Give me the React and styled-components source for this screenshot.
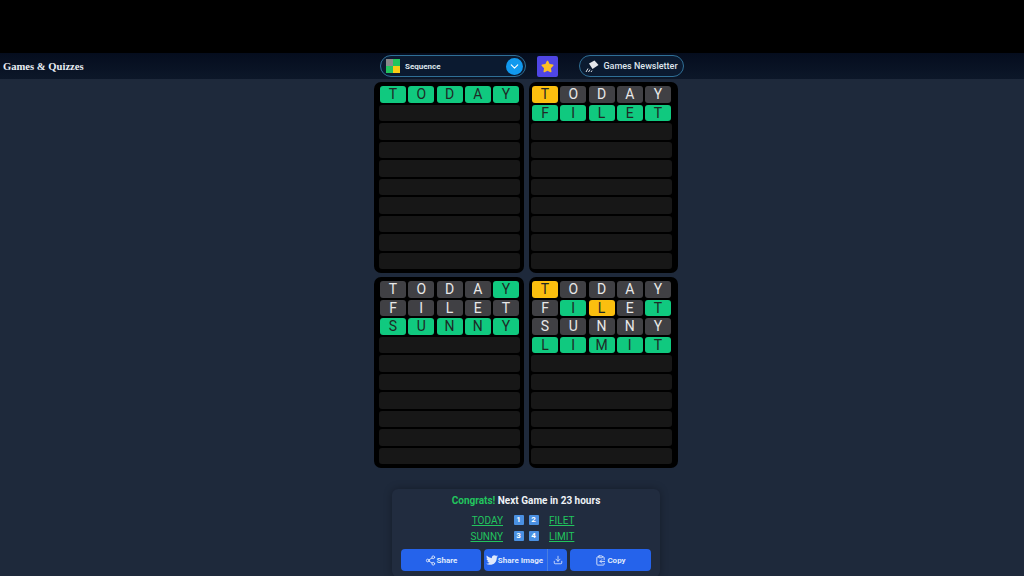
import React from 'react'
import styled, { createGlobalStyle } from 'styled-components'
import { Share2, Download, ClipboardCopy, ChevronDown } from 'lucide-react'
import { FaTwitter, FaStar } from 'react-icons/fa'

const GlobalStyle = createGlobalStyle`
  html, body { margin: 0; padding: 0; background: #1e293b; }
  body { font-family: Roboto, "Liberation Sans", sans-serif; overflow: hidden; }
`

const Page = styled.div`
  width: 1024px;
  height: 576px;
  overflow: hidden;
  background: #1e293b;
`
const AdBand = styled.div`
  height: 53px;
  background: #000;
`
const Header = styled.header`
  height: 26px;
  display: flex;
  align-items: center;
  background: linear-gradient(#050d1e, #0c1729);
`
const Brand = styled.div`
  font-family: "Liberation Serif", serif;
  font-weight: 700;
  font-size: 10.6px;
  color: #e8edf3;
  padding-left: 3px;
  box-sizing: border-box;
  width: 380px;
  flex: none;
`
const Select = styled.div`
  width: 146px;
  height: 22px;
  box-sizing: border-box;
  border: 1px solid #2f6f96;
  border-radius: 11px;
  background: #0b1a30;
  display: flex;
  align-items: center;
  padding: 0 2px 0 5px;
  flex: none;
`
const SelectLabel = styled.span`
  font-size: 8px;
  font-weight: 700;
  color: #dfe5ec;
  margin-left: 5px;
  flex: 1;
`
const Chevron = styled.span`
  width: 17px;
  height: 17px;
  border-radius: 50%;
  background: #1199ee;
  color: #fff;
  display: flex;
  align-items: center;
  justify-content: center;
`
const StarBox = styled.div`
  width: 21px;
  height: 21px;
  margin-left: 11px;
  border-radius: 2px;
  background: #4f46e5;
  color: #fbbf24;
  display: flex;
  align-items: center;
  justify-content: center;
  flex: none;
`
const Newsletter = styled.div`
  width: 105px;
  height: 22px;
  box-sizing: border-box;
  margin-left: 21px;
  border: 1px solid #2f6f96;
  border-radius: 11px;
  background: #0b1a30;
  display: flex;
  align-items: center;
  justify-content: center;
  gap: 4px;
  font-size: 9px;
  font-weight: 500;
  color: #dfe5ec;
  flex: none;
`
const Boards = styled.main`
  display: grid;
  grid-template-columns: 149.5px 149.5px;
  gap: 4.5px 5px;
  width: 304px;
  margin: 3px 0 0 374px;
`
const Board = styled.section`
  height: 190.5px;
  box-sizing: border-box;
  background: #000;
  border-radius: 7px;
  padding: ${p => (p.$right ? '4px 7px 3px 3.5px' : '4px 4.5px 3px 6px')};
  display: flex;
  flex-direction: column;
  justify-content: space-between;
`
const Row = styled.div`
  height: 16.6px;
  display: grid;
  grid-template-columns: repeat(5, 1fr);
  gap: 2.25px;
  border-radius: 3px;
  margin: 0 ${p => (p.$empty ? '-1px' : '0')};
  background: ${p => (p.$empty ? '#171717' : 'transparent')};
`
const Cell = styled.div`
  border-radius: 3px;
  display: flex;
  align-items: center;
  justify-content: center;
  font-size: 14px;
  background: ${p => ({ g: '#10c97f', y: '#fbbf0f', n: '#404044' }[p.$s])};
  color: ${p => (p.$s === 'n' ? '#e8e8e8' : '#1f2a26')};
`
const Result = styled.div`
  width: 268px;
  height: 88px;
  margin: 21.5px 0 0 392px;
  box-sizing: border-box;
  padding: 5px 9px 0;
  border-radius: 6px;
  background: #212c3f;
  box-shadow: 0 0 8px rgba(0, 0, 0, 0.3);
`
const Title = styled.div`
  text-align: center;
  font-size: 10px;
  font-weight: 700;
  color: #eef2f6;
  line-height: 14px;
  span { color: #22c55e; }
`
const Words = styled.div`
  display: grid;
  grid-template-columns: 102px 46px 1fr;
  grid-auto-rows: 16px;
  margin-top: 4px;
  align-items: center;
`
const Word = styled.a`
  font-size: 10px;
  color: #22c55e;
  text-decoration: underline;
  text-align: ${p => p.$align};
`
const Nums = styled.div`
  display: flex;
  justify-content: center;
  gap: 5px;
`
const Num = styled.span`
  width: 10px;
  height: 10px;
  background: #4a90e2;
  border-radius: 1px;
  color: #fff;
  font-size: 8px;
  font-weight: 700;
  line-height: 10px;
  text-align: center;
`
const Buttons = styled.div`
  display: flex;
  gap: 3px;
  margin-top: 5px;
`
const Btn = styled.button`
  width: ${p => p.$w}px;
  height: 22px;
  border: 0;
  border-radius: 4px;
  background: #2563eb;
  color: #dfe8fb;
  font: 700 8px Roboto, sans-serif;
  display: flex;
  align-items: center;
  justify-content: center;
  padding: 0;
  gap: 1px;
`
const Split = styled.div`
  display: flex;
  width: 83px;
  height: 22px;
  border-radius: 4px;
  background: #2563eb;
  color: #dfe8fb;
  font: 700 8px Roboto, sans-serif;
  align-items: center;
`
const SplitMain = styled.div`
  width: 63px;
  box-sizing: border-box;
  padding-right: 2px;
  display: flex;
  align-items: center;
  justify-content: center;
  gap: 0;
`
const SplitIcon = styled.div`
  flex: 1;
  height: 22px;
  border-left: 1px solid #4a7ee0;
  display: flex;
  align-items: center;
  justify-content: center;
`

const boards = [
  [[ 'TODAY', 'ggggg' ]],
  [[ 'TODAY', 'ynnnn' ], [ 'FILET', 'ggggg' ]],
  [[ 'TODAY', 'nnnng' ], [ 'FILET', 'nnnnn' ], [ 'SUNNY', 'ggggg' ]],
  [[ 'TODAY', 'ynnnn' ], [ 'FILET', 'ngyng' ], [ 'SUNNY', 'nnnnn' ], [ 'LIMIT', 'ggggg' ]],
]

function Logo() {
  return (
    <svg width="14" height="14" viewBox="0 0 14 14">
      <rect width="7" height="7" fill="#8a8a8a" />
      <rect x="7" width="7" height="7" fill="#22c55e" />
      <rect y="7" width="7" height="7" fill="#22c55e" />
      <rect x="7" y="7" width="7" height="7" fill="#facc15" />
    </svg>
  )
}

function Mail() {
  return (
    <svg width="14" height="13" viewBox="0 0 14 13">
      <path d="M4 3.5 L9.5 0.5 L13.5 5 L7.5 9 Z" fill="#e5e7eb" />
      <path d="M1 12 L3 8.5 M3.5 12 L5 9.5 M6 12 L7 10.5" stroke="#e5e7eb" strokeWidth="1" />
    </svg>
  )
}

export default function App() {
  return (
    <Page>
      <GlobalStyle />
      <AdBand />
      <Header>
        <Brand>Games &amp; Quizzes</Brand>
        <Select>
          <Logo />
          <SelectLabel>Sequence</SelectLabel>
          <Chevron><ChevronDown size={13} strokeWidth={2} /></Chevron>
        </Select>
        <StarBox><FaStar size={13} /></StarBox>
        <Newsletter><Mail />Games Newsletter</Newsletter>
      </Header>
      <Boards>
        {boards.map((rows, b) => (
          <Board key={b} $right={b % 2 === 1}>
            {Array.from({ length: 10 }, (_, i) => {
              const r = rows[i]
              if (!r) return <Row key={i} $empty />
              return (
                <Row key={i}>
                  {r[0].split('').map((c, j) => <Cell key={j} $s={r[1][j]}>{c}</Cell>)}
                </Row>
              )
            })}
          </Board>
        ))}
      </Boards>
      <Result>
        <Title><span>Congrats!</span> Next Game in 23 hours</Title>
        <Words>
          <Word $align="right">TODAY</Word>
          <Nums><Num>1</Num><Num>2</Num></Nums>
          <Word $align="left">FILET</Word>
          <Word $align="right">SUNNY</Word>
          <Nums><Num>3</Num><Num>4</Num></Nums>
          <Word $align="left">LIMIT</Word>
        </Words>
        <Buttons>
          <Btn $w={80}><Share2 size={11} />Share</Btn>
          <Split>
            <SplitMain><FaTwitter size={12} />Share Image</SplitMain>
            <SplitIcon><Download size={10} /></SplitIcon>
          </Split>
          <Btn $w={81}><ClipboardCopy size={11} />Copy</Btn>
        </Buttons>
      </Result>
    </Page>
  )
}
